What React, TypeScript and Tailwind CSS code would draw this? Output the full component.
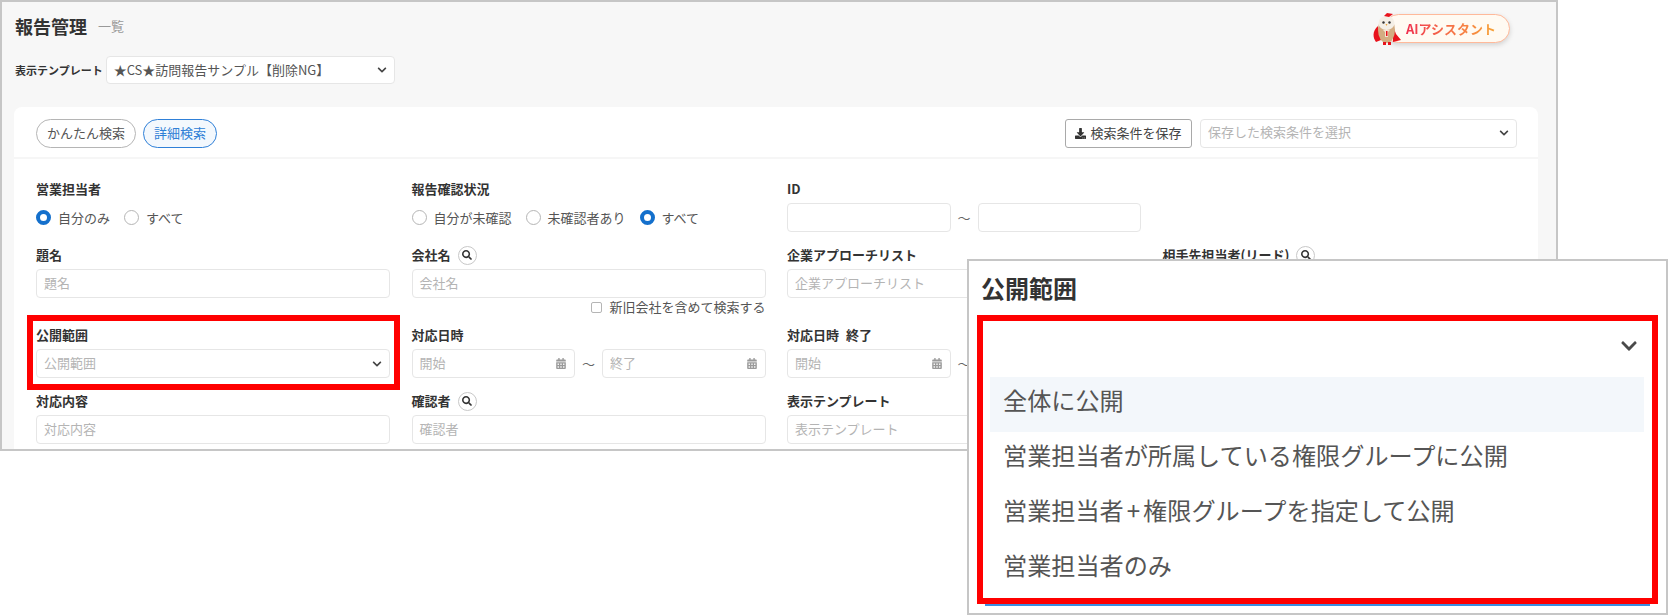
import React from 'react';
import { FaCalendarAlt, FaChevronDown, FaDownload, FaSearch } from 'react-icons/fa';

const Owl: React.FC = () => (
  <svg viewBox="0 0 28 32" className="w-[28px] h-[32px] shrink-0">
    <path d="M5 13 C0 17 -1 24 3 29 L8 27 Z" fill="#e8121c" />
    <path d="M20 13 L23 21 L28 27 L20 29 Z" fill="#e8121c" />
    <ellipse cx="13.5" cy="17" rx="8.5" ry="13" fill="#d3ad82" />
    <ellipse cx="13.5" cy="10" rx="8" ry="7" fill="#f4efe6" />
    <circle cx="10.5" cy="9.5" r="1.2" fill="#333" />
    <circle cx="16.5" cy="9.5" r="1.2" fill="#333" />
    <path d="M12.5 11 L14.5 11 L13.5 13 Z" fill="#e9a33a" />
    <path d="M11 3 L14 0 L20 1 L16 4 Z" fill="#e8121c" />
    <path d="M10 17 L17 17 L15 19 L15 24 L12 24 L12 19 Z" fill="#f6e4d2" />
    <path d="M13 18 L14.5 18 L14.5 23 L13 23 Z" fill="#e8121c" />
    <path d="M10 29 L13 29 L13 32 L10 32 Z M15 29 L18 29 L18 32 L15 32 Z" fill="#e8121c" />
  </svg>
);

const Radio: React.FC<{ label: string; checked?: boolean }> = ({ label, checked }) => (
  <label className="flex items-center gap-[7px]">
    {checked ? (
      <span className="w-[15px] h-[15px] rounded-full border-[4px] border-[#1470cc] bg-white"></span>
    ) : (
      <span className="w-[15px] h-[15px] rounded-full border border-[#b5b5b5] bg-white"></span>
    )}
    <span className="text-[13px] leading-5 text-[#555]">{label}</span>
  </label>
);

const SearchBadge: React.FC = () => (
  <span className="w-[19px] h-[19px] rounded-full border border-[#c8c8c8] flex items-center justify-center text-[#333] ml-[7px]">
    <FaSearch className="w-[10px] h-[10px]" />
  </span>
);

const Label: React.FC<{ text: string; search?: boolean }> = ({ text, search }) => (
  <div className="h-5 mb-1 flex items-center text-[13px] font-bold text-[#333] [word-spacing:4px]">
    <span>{text}</span>
    {search && <SearchBadge />}
  </div>
);

const Box: React.FC<{ children?: React.ReactNode; className?: string }> = ({ children, className }) => (
  <div
    className={`h-[29px] bg-white border border-[#e6e6e6] rounded-[4px] flex items-center justify-between px-[7px] pb-[2px] text-[13px] text-[#b4b4b4] ${className ?? ''}`}
  >
    {children}
  </div>
);

const DateBox: React.FC<{ text?: string }> = ({ text }) => (
  <Box className="flex-1">
    <span>{text}</span>
    <FaCalendarAlt className="w-[10px] h-[11px] mt-[2px] text-[#9a9a9a] mr-[1px]" />
  </Box>
);

const DateRange: React.FC<{ from: string; to: string }> = ({ from, to }) => (
  <div className="flex items-center">
    <DateBox text={from} />
    <span className="w-[27px] text-center text-[13px] text-[#666]">〜</span>
    <DateBox text={to} />
  </div>
);

const options: React.ReactNode[] = [
  '全体に公開',
  '営業担当者が所属している権限グループに公開',
  <>
    営業担当者<span className="mx-[3px]">+</span>権限グループを指定して公開
  </>,
  '営業担当者のみ',
];

const App: React.FC = () => {
  return (
    <div className="relative w-[1668px] h-[615px] bg-white overflow-hidden font-['Noto_Sans_CJK_JP','Liberation_Sans',sans-serif]">
      {/* Main window */}
      <div className="w-[1558px] h-[451px] border-2 border-[#c6c6c6] bg-[#f7f7f7] overflow-hidden">
        {/* Title */}
        <div className="h-[32px] mt-[8px] ml-[13px] mr-[46px] flex items-center justify-between">
          <div className="flex items-center gap-[11px]">
            <h1 className="text-[18px] font-bold text-[#333]">報告管理</h1>
            <span className="text-[13px] text-[#999]">一覧</span>
          </div>
          <div className="flex items-center mt-[5px]">
            <div className="relative z-10 -mr-[17px]">
              <Owl />
            </div>
            <div className="h-[29px] pl-[21px] pr-[13px] flex items-center rounded-full bg-[#fffaf2] border border-[#ffb99a] shadow-[0_2px_5px_rgba(0,0,0,0.15)]">
              <span className="text-[13px] font-bold bg-linear-to-r from-[#ef2d4e] to-[#f7a233] bg-clip-text text-transparent">
                AIアシスタント
              </span>
            </div>
          </div>
        </div>

        {/* Template select */}
        <div className="mt-[14px] ml-[13px] flex items-center gap-[3px]">
          <span className="text-[11px] font-bold text-[#333]">表示テンプレート</span>
          <div className="w-[289px] h-[28px] bg-white border border-[#e6e6e6] rounded-[4px] flex items-center justify-between pl-[7px] pr-[7px] text-[13px] text-[#555]">
            <span>★CS★訪問報告サンプル【削除NG】</span>
            <FaChevronDown className="w-[10px] h-[10px] text-[#444]" />
          </div>
        </div>

        {/* Search card */}
        <div className="mt-[23px] ml-[12px] w-[1524px] h-[400px] bg-white rounded-t-[8px]">
          <div className="h-[52px] pt-[2px] pl-[22px] pr-[21px] border-b-2 border-[#f6f6f6] flex items-center justify-between">
            <div className="flex items-center gap-[7px]">
              <button className="h-[29px] px-[10px] rounded-full border border-[#b5b5b5] text-[13px] text-[#555]">
                かんたん検索
              </button>
              <button className="h-[29px] px-[10px] rounded-full border border-[#2f80d8] bg-[#f3f8fd] text-[13px] text-[#2f7fd6]">
                詳細検索
              </button>
            </div>
            <div className="flex items-center gap-[8px]">
              <button className="h-[29px] w-[127px] rounded-[3px] border border-[#a9a9a9] flex items-center justify-center gap-[4px] text-[13px] text-[#444]">
                <FaDownload className="w-[11px] h-[11px] text-[#333]" />
                検索条件を保存
              </button>
              <Box className="w-[317px]">
                <span>保存した検索条件を選択</span>
                <FaChevronDown className="w-[10px] h-[10px] mt-[2px] text-[#444]" />
              </Box>
            </div>
          </div>

          <div className="pt-[20px] pl-[22px] grid grid-cols-[354px_354px_354px_354px] gap-x-[21.5px] gap-y-[13px]">
            {/* Row 1 */}
            <div>
              <Label text="営業担当者" />
              <div className="h-[29px] flex items-center gap-[14px]">
                <Radio label="自分のみ" checked />
                <Radio label="すべて" />
              </div>
            </div>
            <div>
              <Label text="報告確認状況" />
              <div className="h-[29px] flex items-center gap-[14px]">
                <Radio label="自分が未確認" />
                <Radio label="未確認者あり" />
                <Radio label="すべて" checked />
              </div>
            </div>
            <div>
              <Label text="ID" />
              <div className="flex items-center">
                <Box className="flex-1" />
                <span className="w-[27px] text-center text-[13px] text-[#666]">〜</span>
                <Box className="flex-1" />
              </div>
            </div>
            <div></div>

            {/* Row 2 */}
            <div>
              <Label text="題名" />
              <Box>題名</Box>
            </div>
            <div className="h-[67px]">
              <Label text="会社名" search />
              <Box>会社名</Box>
              <div className="mt-[2px] h-[14px] flex items-center justify-end gap-[7px] text-[13px] text-[#555]">
                <span className="w-[11px] h-[11px] border border-[#b5b5b5] rounded-[2px]"></span>
                新旧会社を含めて検索する
              </div>
            </div>
            <div>
              <Label text="企業アプローチリスト" />
              <Box>企業アプローチリスト</Box>
            </div>
            <div>
              <Label text="相手先担当者(リード)" search />
              <Box>相手先担当者(リード)</Box>
            </div>

            {/* Row 3 */}
            <div>
              <Label text="公開範囲" />
              <Box>
                <span>公開範囲</span>
                <FaChevronDown className="w-[10px] h-[10px] mt-[2px] text-[#444]" />
              </Box>
            </div>
            <div>
              <Label text="対応日時" />
              <DateRange from="開始" to="終了" />
            </div>
            <div>
              <Label text="対応日時 終了" />
              <DateRange from="開始" to="終了" />
            </div>
            <div></div>

            {/* Row 4 */}
            <div>
              <Label text="対応内容" />
              <Box>対応内容</Box>
            </div>
            <div>
              <Label text="確認者" search />
              <Box>確認者</Box>
            </div>
            <div>
              <Label text="表示テンプレート" />
              <Box>表示テンプレート</Box>
            </div>
          </div>
        </div>
      </div>

      {/* Highlight over the field */}
      <div className="absolute left-[27px] top-[315px] w-[373px] h-[75px] border-[6px] border-[#ff0000]"></div>

      {/* Enlarged dropdown callout */}
      <div className="absolute left-[967px] top-[259px] w-[701px] h-[356px] bg-white border-2 border-[#c6c6c6] pl-[8px] pr-[8px]">
        <div className="h-[54px] pl-[4px] flex items-center text-[24px] font-bold text-[#333]">公開範囲</div>
        <div className="w-[681px] h-[289px] border-[6px] border-[#ff0000]">
          <div className="h-[56px] flex items-center justify-end pr-[14px] pb-[7px]">
            <FaChevronDown className="w-[18px] h-[18px] text-[#4a4a4a]" />
          </div>
          <ul className="pl-[7px] pr-[8px]">
            {options.map((option, index) => (
              <li
                key={index}
                className={`h-[55px] pl-[13px] pb-[8px] flex items-center text-[24.15px] text-[#555] ${index === 0 ? 'bg-[#f3f7fb]' : ''}`}
              >
                <span>{option}</span>
              </li>
            ))}
          </ul>
        </div>
        <div className="ml-[8px] w-[665px] h-[2px] bg-[#3a8ee0]"></div>
      </div>
    </div>
  );
};

export default App;
